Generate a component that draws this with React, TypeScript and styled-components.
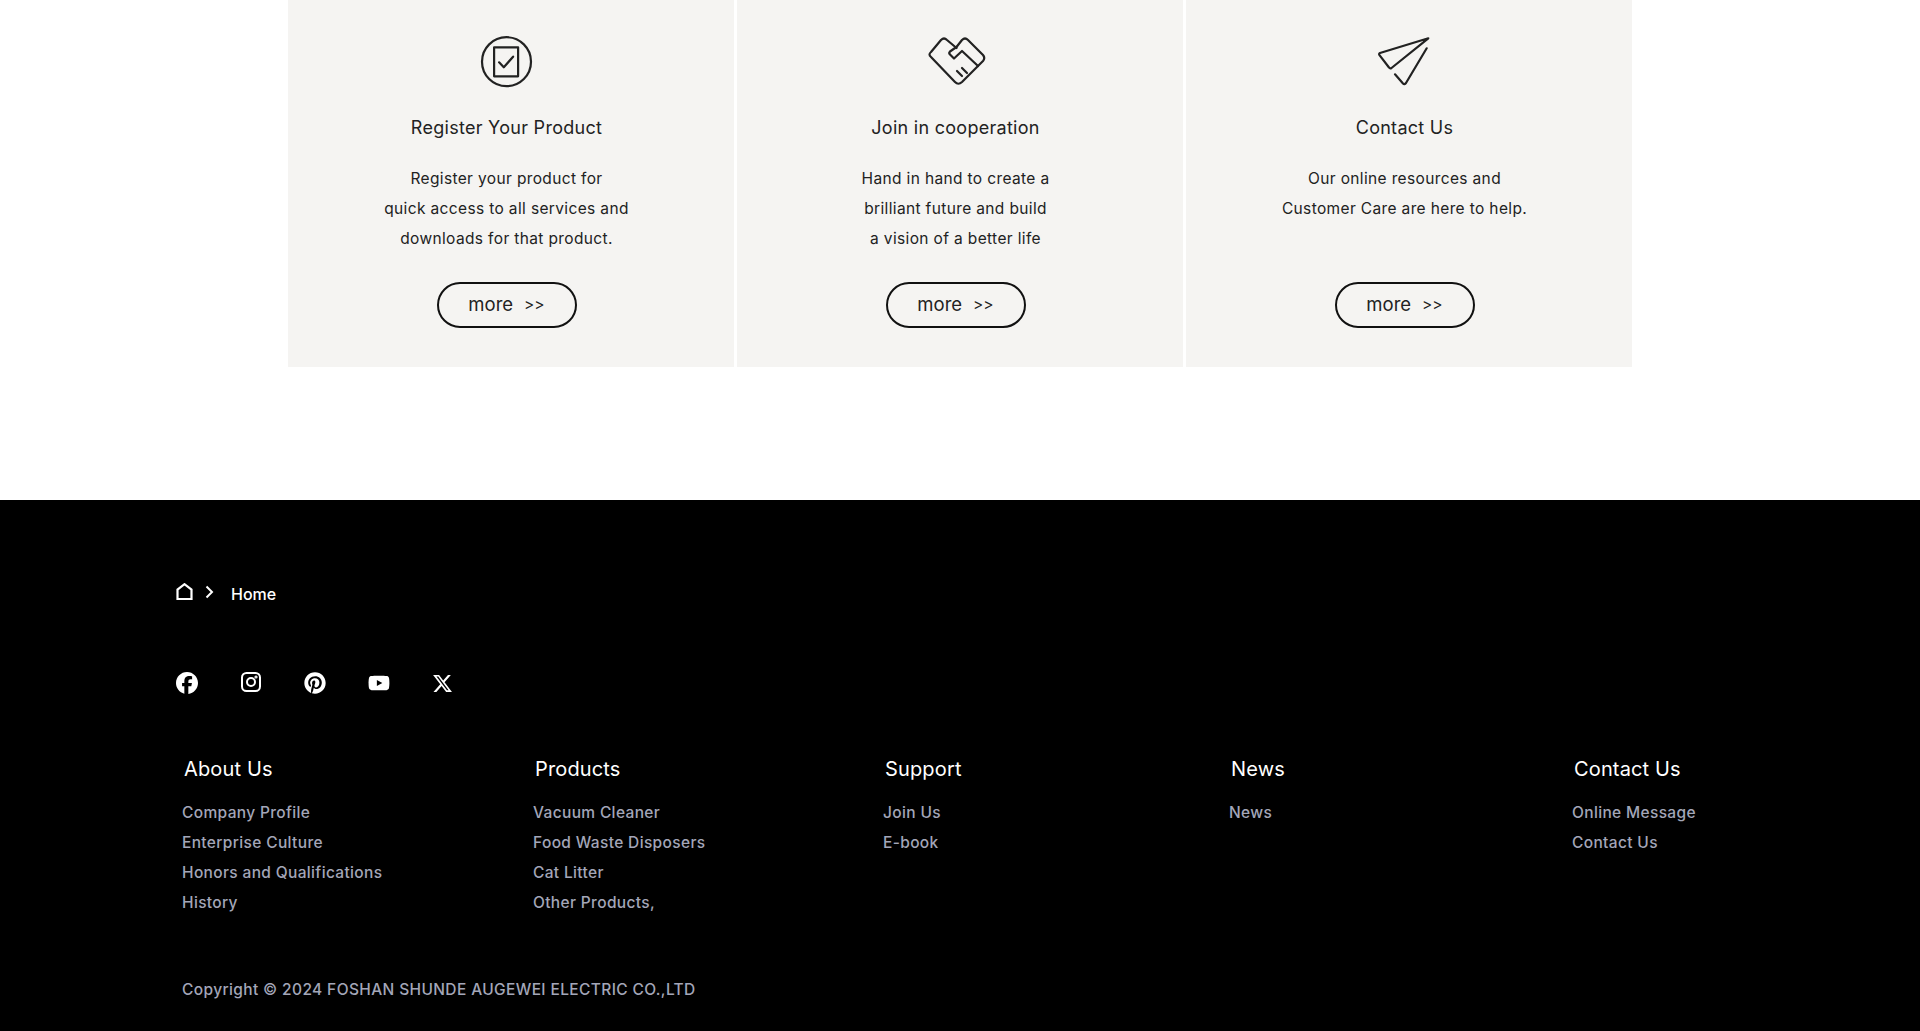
import styled, { createGlobalStyle } from "styled-components";
import { FaFacebook, FaPinterest, FaYoutube, FaXTwitter } from "react-icons/fa6";

const GlobalStyle = createGlobalStyle`
  html, body {
    margin: 0;
    padding: 0;
    background: #fff;
    font-family: "Inter", "Open Sans", sans-serif;
  }
`;

const Cards = styled.section`
  display: grid;
  grid-template-columns: repeat(3, 446px);
  gap: 3px;
  justify-content: center;
  height: 500px;
`;
const Card = styled.div`
  height: 367px;
  background: #f5f4f2;
  padding: 20px 9px 0 0;
  box-sizing: border-box;
  display: flex;
  flex-direction: column;
  align-items: center;
  color: #222;
`;
const CardIcon = styled.svg`
  width: 80px;
  height: 80px;
  fill: none;
  stroke: #222;
  stroke-width: 2.2;
  stroke-linecap: round;
  stroke-linejoin: round;
  flex-shrink: 0;
`;
const CardTitle = styled.h3`
  margin: 16px 0 0;
  font-size: 18px;
  line-height: 24px;
  font-weight: 400;
  letter-spacing: 0.28px;
`;
const CardText = styled.p`
  margin: 24px 0 0;
  min-height: 90px;
  font-size: 15.5px;
  line-height: 30px;
  text-align: center;
  letter-spacing: 0.36px;
`;
const More = styled.a`
  margin-top: 28px;
  width: 140px;
  height: 46px;
  box-sizing: border-box;
  border: 2px solid #111;
  border-radius: 23px;
  padding-bottom: 2px;
  display: flex;
  align-items: center;
  justify-content: center;
  gap: 11px;
  font-size: 18.5px;
  color: #222;
  span {
    font-size: 15.5px;
  }
`;

const Footer = styled.footer`
  height: 531px;
  box-sizing: border-box;
  background: #000;
  padding: 82px 0 0 176px;
`;
const Crumbs = styled.div`
  display: flex;
  align-items: center;
  height: 24px;
  color: #fff;
  font-size: 16px;
  font-weight: 500;
`;
const HomeIcon = styled.svg`
  fill: none;
  stroke: #fff;
  stroke-width: 2.2;
  margin-top: -6px;
`;
const CrumbArrow = styled.svg`
  fill: none;
  stroke: #fff;
  stroke-width: 2;
  margin: -4px 17px 0 12px;
`;
const Socials = styled.div`
  display: flex;
  align-items: center;
  gap: 42px;
  height: 22px;
  margin-top: 66px;
  color: #fff;
`;
const InstaIcon = styled.svg`
  fill: none;
  stroke: #fff;
  stroke-width: 2;
  margin-top: -2px;
`;
const Columns = styled.div`
  display: grid;
  grid-template-columns: 351px 350px 346px 343px auto;
  margin: 61px 0 0 6px;
`;
const ColumnTitle = styled.div`
  color: #fff;
  font-size: 20px;
  font-weight: 400;
  line-height: 28px;
  letter-spacing: 0.15px;
  margin: 0 0 15px 2px;
`;
const ColumnLink = styled.a`
  display: block;
  color: #a3a6b8;
  font-size: 15.5px;
  font-weight: 500;
  line-height: 30px;
  letter-spacing: 0.35px;
  white-space: nowrap;
`;
const Copyright = styled.div`
  height: 30px;
  margin: 57px 0 0 6px;
  color: #a3a6b8;
  font-size: 15.5px;
  font-weight: 500;
  line-height: 30px;
  letter-spacing: 0.37px;
`;

const columns = [
  { title: "About Us", links: ["Company Profile", "Enterprise Culture", "Honors and Qualifications", "History"] },
  { title: "Products", links: ["Vacuum Cleaner", "Food Waste Disposers", "Cat Litter", "Other Products,"] },
  { title: "Support", links: ["Join Us", "E-book"] },
  { title: "News", links: ["News"] },
  { title: "Contact Us", links: ["Online Message", "Contact Us"] },
];

export default function App() {
  return (
    <>
      <GlobalStyle />
      <Cards>
        <Card>
          <CardIcon viewBox="0.5 0 80 80">
            <circle cx="40" cy="41.7" r="24.5" />
            <rect x="27.6" y="27.3" width="24" height="29" />
            <path d="M32.6 42.3L37.3 47.3L46.6 36.7" />
          </CardIcon>
          <CardTitle>Register Your Product</CardTitle>
          <CardText>
            Register your product for
            <br />
            quick access to all services and
            <br />
            downloads for that product.
          </CardText>
          <More>
            more <span>&gt;&gt;</span>
          </More>
        </Card>
        <Card>
          <CardIcon viewBox="1 0 80 80">
            <path d="M41.5 27L47 20Q50 17 53 20L68 35Q70.5 38 68 41L47 62Q43.3 65.5 40 62L16 37Q13 34.5 16 32L26 20Q29 17 32 20L41.5 28" />
            <path d="M41.5 27L35 31.5Q33.5 33 35 34.5L39 38.5L47 31L63 46" />
            <path d="M42 51L47 56M47 48L52 53" />
          </CardIcon>
          <CardTitle>Join in cooperation</CardTitle>
          <CardText>
            Hand in hand to create a
            <br />
            brilliant future and build
            <br />a vision of a better life
          </CardText>
          <More>
            more <span>&gt;&gt;</span>
          </More>
        </Card>
        <Card>
          <CardIcon viewBox="0 0 80 80">
            <path d="M63.3 18.3L15 33Q13.5 33.8 14.5 35.2L24 47.5Q25 49 26.5 48L63.3 18.3" />
            <path d="M61.7 28.3L41 63Q39.5 65 38 63.5L30 54.3" />
          </CardIcon>
          <CardTitle>Contact Us</CardTitle>
          <CardText>
            Our online resources and
            <br />
            Customer Care are here to help.
          </CardText>
          <More>
            more <span>&gt;&gt;</span>
          </More>
        </Card>
      </Cards>
      <Footer>
        <Crumbs>
          <HomeIcon width="17" height="17" viewBox="0 0 17 17">
            <path d="M1.5 16V6.5L8.5 1.2L15.5 6.5V16Z" />
          </HomeIcon>
          <CrumbArrow width="9" height="14" viewBox="0 0 9 14">
            <path d="M1.5 1.5L7 7L1.5 12.5" />
          </CrumbArrow>
          Home
        </Crumbs>
        <Socials>
          <FaFacebook size={22} />
          <InstaIcon width="22" height="22" viewBox="0 0 22 22">
            <rect x="2" y="2" width="18" height="18" rx="4.5" />
            <circle cx="11" cy="11" r="4" />
            <circle cx="16" cy="6" r="0.6" />
          </InstaIcon>
          <FaPinterest size={22} />
          <FaYoutube size={22} />
          <FaXTwitter size={21} />
        </Socials>
        <Columns>
          {columns.map((col) => (
            <div key={col.title}>
              <ColumnTitle>{col.title}</ColumnTitle>
              {col.links.map((link) => (
                <ColumnLink key={link}>{link}</ColumnLink>
              ))}
            </div>
          ))}
        </Columns>
        <Copyright>Copyright © 2024 FOSHAN SHUNDE AUGEWEI ELECTRIC CO.,LTD</Copyright>
      </Footer>
    </>
  );
}
